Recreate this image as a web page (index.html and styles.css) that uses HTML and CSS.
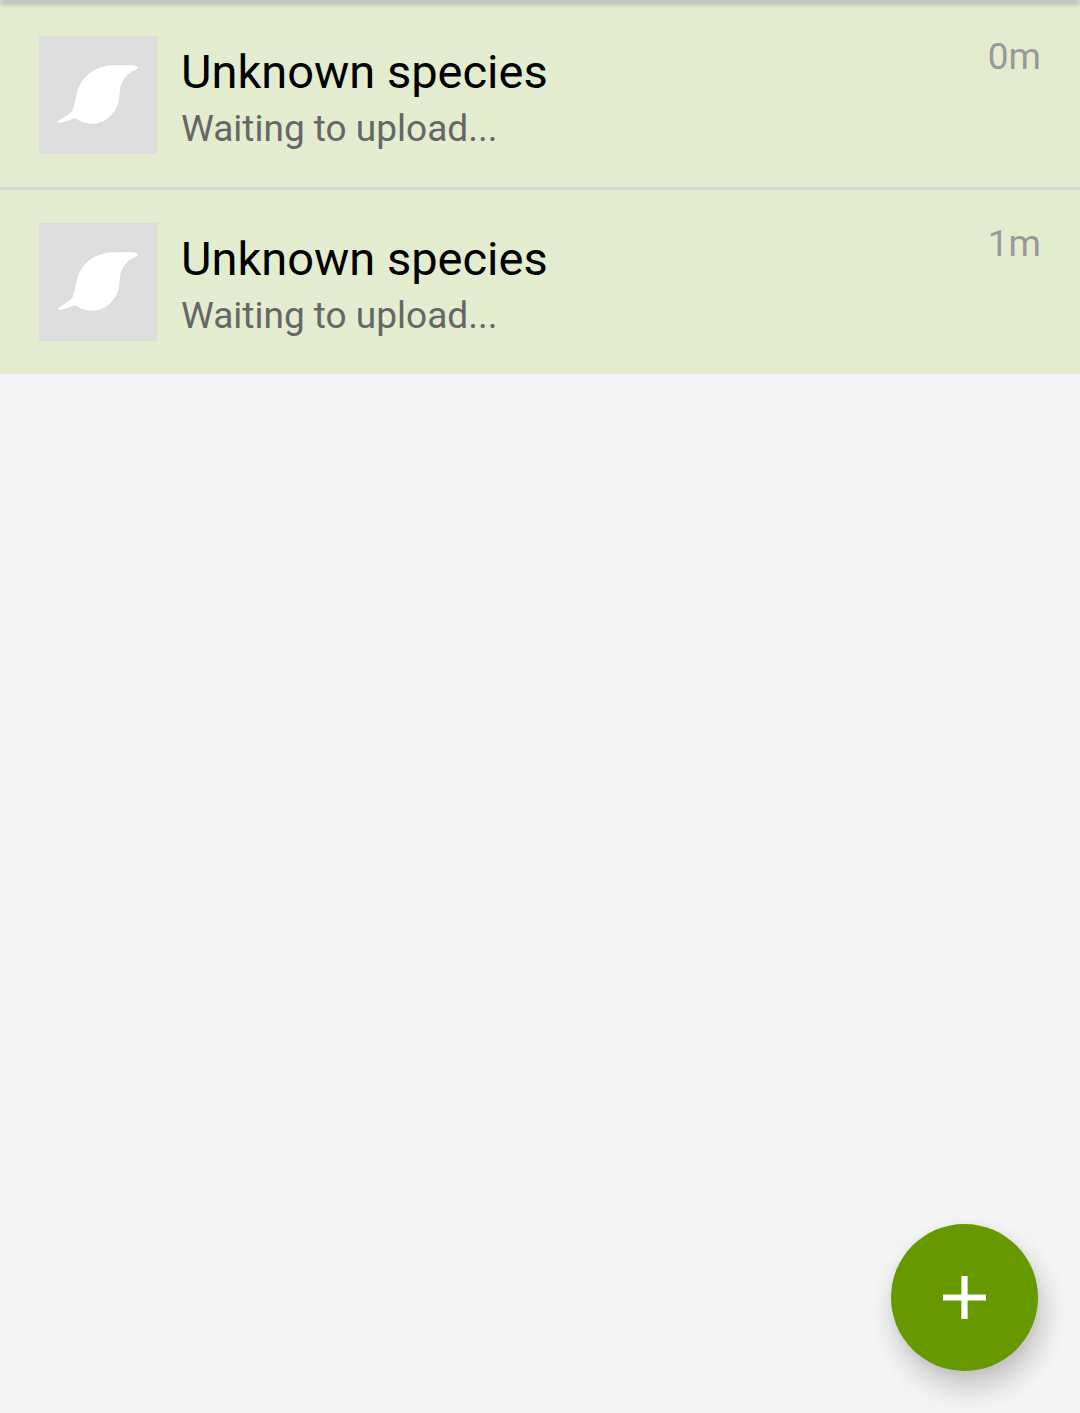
FILE: index.html
```html
<!DOCTYPE html>
<html lang="en">
<head>
<meta charset="utf-8">
<title>Observations</title>
<link rel="stylesheet" href="styles.css">
</head>
<body>
<div class="toolbar-edge"></div>
<main class="list">
  <article class="row">
    <div class="thumb">
      <svg class="leaf" viewBox="0 0 118 118"><path d="M99 31.3C98 29.8 95 29.3 91 29.3H75C66 29.3 59 31.7 52.7 35.7C47.5 39 43.8 43 41.2 48C38.3 53.5 37.4 60 36 65.5C35 69.5 34.5 74 31.8 76.5C28 80 21 83 19 85.6C18.5 86.6 19.5 86.8 20.5 86.7C26.5 86.4 30.5 83.2 35.5 82.4C37.8 82.2 39 84 41 85C45 87 49.8 87.8 54.3 87.7C61.5 87.4 67 84.5 71.5 79.8C75.5 75.7 78.5 71 79.7 65.5C80.9 60 80.3 55 81.7 50C82.8 46 85 42.3 88 39.3C91.5 35.8 97 33.7 99 32.2Z"/></svg>
    </div>
    <div class="text">
      <h2 class="title">Unknown species</h2>
      <p class="status">Waiting to upload...</p>
    </div>
    <time class="age">0m</time>
  </article>
  <article class="row">
    <div class="thumb">
      <svg class="leaf" viewBox="0 0 118 118"><path d="M99 31.3C98 29.8 95 29.3 91 29.3H75C66 29.3 59 31.7 52.7 35.7C47.5 39 43.8 43 41.2 48C38.3 53.5 37.4 60 36 65.5C35 69.5 34.5 74 31.8 76.5C28 80 21 83 19 85.6C18.5 86.6 19.5 86.8 20.5 86.7C26.5 86.4 30.5 83.2 35.5 82.4C37.8 82.2 39 84 41 85C45 87 49.8 87.8 54.3 87.7C61.5 87.4 67 84.5 71.5 79.8C75.5 75.7 78.5 71 79.7 65.5C80.9 60 80.3 55 81.7 50C82.8 46 85 42.3 88 39.3C91.5 35.8 97 33.7 99 32.2Z"/></svg>
    </div>
    <div class="text">
      <h2 class="title">Unknown species</h2>
      <p class="status">Waiting to upload...</p>
    </div>
    <time class="age">1m</time>
  </article>
</main>
<button class="fab" aria-label="Add">
  <svg class="plus" viewBox="0 0 43 43"><path d="M18.4 0h6.2v18.4H43v6.2H24.6V43h-6.2V24.6H0v-6.2h18.4z"/></svg>
</button>
</body>
</html>
```
FILE: styles.css
```css
* {
  box-sizing: border-box;
}

body {
  margin: 0;
  min-height: 1413px;
  background: #f5f5f5;
  font-family: Roboto, sans-serif;
}

.toolbar-edge {
  position: relative;
  height: 3px;
  background: linear-gradient(90deg, #d2d2d2, #c3c3c5 8px, #c3c3c5 calc(100% - 8px), #d2d2d2);
  box-shadow: 0 1px 4px rgba(0, 0, 0, 0.3);
}

.row {
  display: flex;
  height: 184px;
  padding: 33px 39px;
  background: #e3ecce;
}

.row + .row {
  height: 187px;
  border-top: 3px solid #d5d6d3;
}

.thumb {
  width: 118px;
  height: 118px;
  background: #ddd;
}

.leaf {
  display: block;
  width: 118px;
  height: 118px;
  fill: #fff;
}

.text {
  flex: 1;
  padding: 8px 0 0 24px;
}

.title,
.status {
  margin: 0;
  font-weight: 400;
  white-space: nowrap;
}

.title {
  color: #000;
  font-size: 47px;
  line-height: 56px;
}

.status {
  color: #666;
  font-size: 37px;
  line-height: 44px;
  margin-top: 7px;
}

.age {
  color: #999;
  font-size: 37px;
  line-height: 44px;
  margin-top: -1px;
}

.fab {
  position: fixed;
  right: 42px;
  bottom: 42px;
  display: flex;
  align-items: center;
  justify-content: center;
  width: 147px;
  height: 147px;
  padding: 0;
  border: 0;
  border-radius: 50%;
  background: #690;
  box-shadow: 5px 16px 30px rgba(0, 0, 0, 0.22), 0 2px 12px rgba(0, 0, 0, 0.06);
}

.plus {
  width: 43px;
  height: 43px;
  fill: #fff;
}
```
